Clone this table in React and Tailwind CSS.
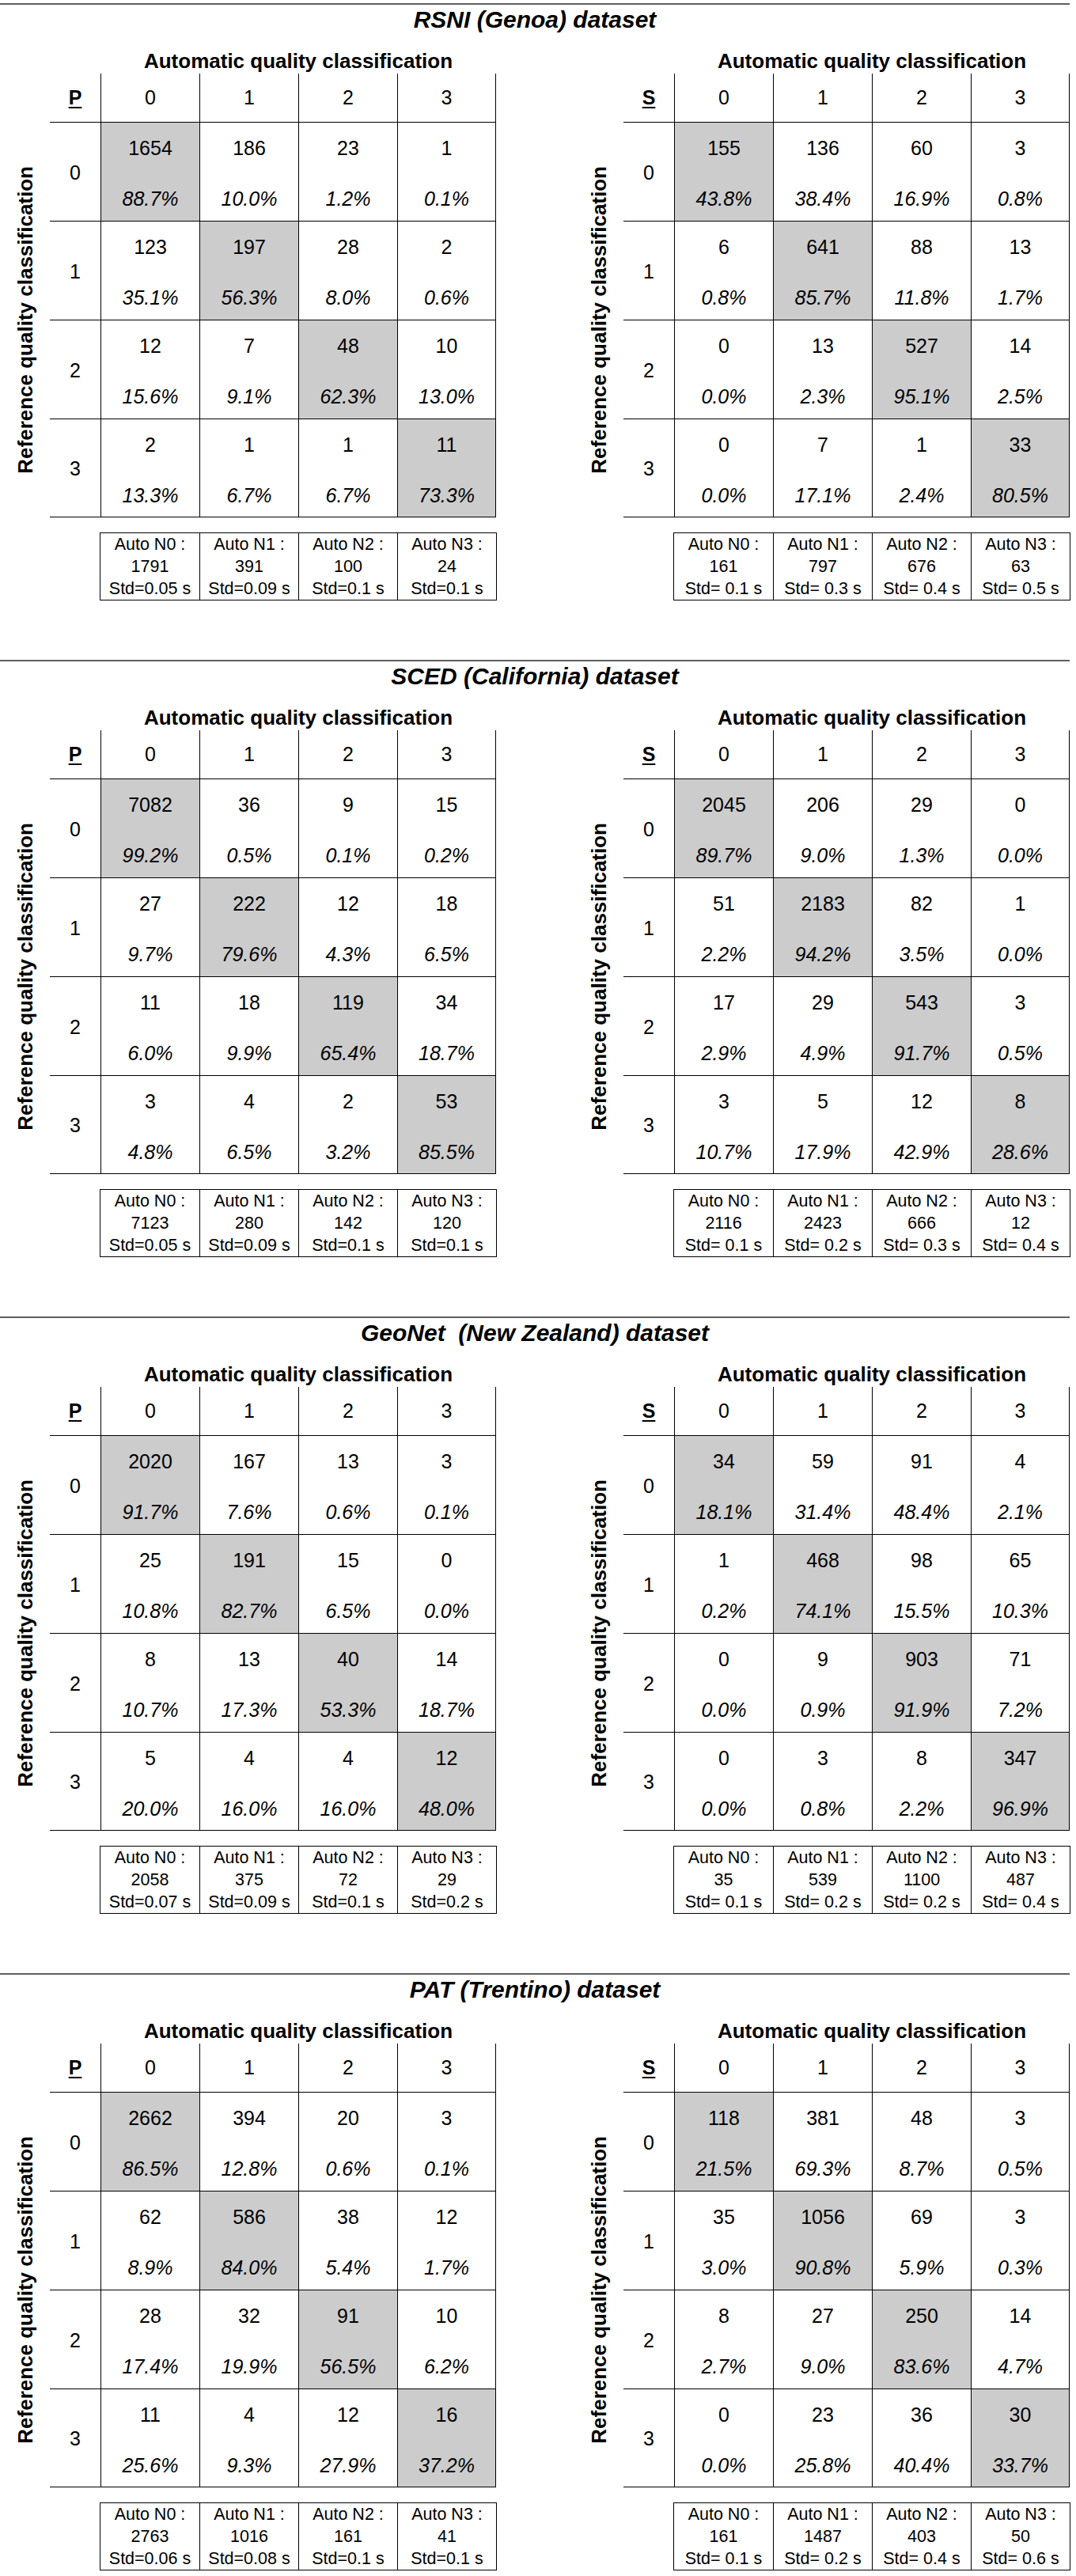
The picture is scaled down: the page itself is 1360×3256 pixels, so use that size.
const SECTIONS = [
    {
        title: "RSNI (Genoa) dataset",
        p: {
            rows: [
                [["1654", "88.7%"], ["186", "10.0%"], ["23", "1.2%"], ["1", "0.1%"]],
                [["123", "35.1%"], ["197", "56.3%"], ["28", "8.0%"], ["2", "0.6%"]],
                [["12", "15.6%"], ["7", "9.1%"], ["48", "62.3%"], ["10", "13.0%"]],
                [["2", "13.3%"], ["1", "6.7%"], ["1", "6.7%"], ["11", "73.3%"]],
            ],
            totals: ["1791", "391", "100", "24"],
            std: ["Std=0.05 s", "Std=0.09 s", "Std=0.1 s", "Std=0.1 s"],
        },
        s: {
            rows: [
                [["155", "43.8%"], ["136", "38.4%"], ["60", "16.9%"], ["3", "0.8%"]],
                [["6", "0.8%"], ["641", "85.7%"], ["88", "11.8%"], ["13", "1.7%"]],
                [["0", "0.0%"], ["13", "2.3%"], ["527", "95.1%"], ["14", "2.5%"]],
                [["0", "0.0%"], ["7", "17.1%"], ["1", "2.4%"], ["33", "80.5%"]],
            ],
            totals: ["161", "797", "676", "63"],
            std: ["Std= 0.1 s", "Std= 0.3 s", "Std= 0.4 s", "Std= 0.5 s"],
        },
    },
    {
        title: "SCED (California) dataset",
        p: {
            rows: [
                [["7082", "99.2%"], ["36", "0.5%"], ["9", "0.1%"], ["15", "0.2%"]],
                [["27", "9.7%"], ["222", "79.6%"], ["12", "4.3%"], ["18", "6.5%"]],
                [["11", "6.0%"], ["18", "9.9%"], ["119", "65.4%"], ["34", "18.7%"]],
                [["3", "4.8%"], ["4", "6.5%"], ["2", "3.2%"], ["53", "85.5%"]],
            ],
            totals: ["7123", "280", "142", "120"],
            std: ["Std=0.05 s", "Std=0.09 s", "Std=0.1 s", "Std=0.1 s"],
        },
        s: {
            rows: [
                [["2045", "89.7%"], ["206", "9.0%"], ["29", "1.3%"], ["0", "0.0%"]],
                [["51", "2.2%"], ["2183", "94.2%"], ["82", "3.5%"], ["1", "0.0%"]],
                [["17", "2.9%"], ["29", "4.9%"], ["543", "91.7%"], ["3", "0.5%"]],
                [["3", "10.7%"], ["5", "17.9%"], ["12", "42.9%"], ["8", "28.6%"]],
            ],
            totals: ["2116", "2423", "666", "12"],
            std: ["Std= 0.1 s", "Std= 0.2 s", "Std= 0.3 s", "Std= 0.4 s"],
        },
    },
    {
        title: "GeoNet  (New Zealand) dataset",
        p: {
            rows: [
                [["2020", "91.7%"], ["167", "7.6%"], ["13", "0.6%"], ["3", "0.1%"]],
                [["25", "10.8%"], ["191", "82.7%"], ["15", "6.5%"], ["0", "0.0%"]],
                [["8", "10.7%"], ["13", "17.3%"], ["40", "53.3%"], ["14", "18.7%"]],
                [["5", "20.0%"], ["4", "16.0%"], ["4", "16.0%"], ["12", "48.0%"]],
            ],
            totals: ["2058", "375", "72", "29"],
            std: ["Std=0.07 s", "Std=0.09 s", "Std=0.1 s", "Std=0.2 s"],
        },
        s: {
            rows: [
                [["34", "18.1%"], ["59", "31.4%"], ["91", "48.4%"], ["4", "2.1%"]],
                [["1", "0.2%"], ["468", "74.1%"], ["98", "15.5%"], ["65", "10.3%"]],
                [["0", "0.0%"], ["9", "0.9%"], ["903", "91.9%"], ["71", "7.2%"]],
                [["0", "0.0%"], ["3", "0.8%"], ["8", "2.2%"], ["347", "96.9%"]],
            ],
            totals: ["35", "539", "1100", "487"],
            std: ["Std= 0.1 s", "Std= 0.2 s", "Std= 0.2 s", "Std= 0.4 s"],
        },
    },
    {
        title: "PAT (Trentino) dataset",
        p: {
            rows: [
                [["2662", "86.5%"], ["394", "12.8%"], ["20", "0.6%"], ["3", "0.1%"]],
                [["62", "8.9%"], ["586", "84.0%"], ["38", "5.4%"], ["12", "1.7%"]],
                [["28", "17.4%"], ["32", "19.9%"], ["91", "56.5%"], ["10", "6.2%"]],
                [["11", "25.6%"], ["4", "9.3%"], ["12", "27.9%"], ["16", "37.2%"]],
            ],
            totals: ["2763", "1016", "161", "41"],
            std: ["Std=0.06 s", "Std=0.08 s", "Std=0.1 s", "Std=0.1 s"],
        },
        s: {
            rows: [
                [["118", "21.5%"], ["381", "69.3%"], ["48", "8.7%"], ["3", "0.5%"]],
                [["35", "3.0%"], ["1056", "90.8%"], ["69", "5.9%"], ["3", "0.3%"]],
                [["8", "2.7%"], ["27", "9.0%"], ["250", "83.6%"], ["14", "4.7%"]],
                [["0", "0.0%"], ["23", "25.8%"], ["36", "40.4%"], ["30", "33.7%"]],
            ],
            totals: ["161", "1487", "403", "50"],
            std: ["Std= 0.1 s", "Std= 0.2 s", "Std= 0.4 s", "Std= 0.6 s"],
        },
    },
];

// grid columns of the four automatic classes (column 1 = axis label, 2 = row labels)
const COL = ["col-start-3", "col-start-4", "col-start-5", "col-start-6"];
const ROW = ["row-start-2", "row-start-3", "row-start-4", "row-start-5"];

// One confusion matrix: axis labels, 4x4 grid with the diagonal shaded, and
// the per-class totals box underneath.
const Matrix = ({ phase, data }) => (
    <div className="w-[627px]">
        <div className="ml-[127px] w-[500px] text-center text-[26px] font-bold leading-[32px] whitespace-nowrap">
            Automatic quality classification
        </div>

        <div className="grid grid-cols-[63px_64px_repeat(4,125px)] grid-rows-[61px_repeat(4,125px)]">
            <div className="col-start-1 row-start-2 row-span-4 flex items-center justify-center">
                <span className="[writing-mode:vertical-rl] rotate-180 whitespace-nowrap text-[26px] font-bold leading-none">
                    Reference quality classification
                </span>
            </div>

            <div className="col-start-2 row-start-1 flex items-center justify-center text-[25px] font-bold underline underline-offset-[3px]">
                {phase}
            </div>
            {[0, 1, 2, 3].map((c) => (
                <div key={c}
                    className={`${COL[c]} row-start-1 flex items-center justify-center border-l border-black text-[25px] ${c === 3 ? "border-r" : ""}`}>
                    {c}
                </div>
            ))}

            {data.rows.map((row, r) => (
                <div key={r} className="contents">
                    <div className={`col-start-2 ${ROW[r]} flex items-center justify-center border-t border-black pt-[3px] text-[25px] ${r === 3 ? "border-b" : ""}`}>
                        {r}
                    </div>
                    {row.map(([n, pct], c) => (
                        <div key={c}
                            className={`${COL[c]} ${ROW[r]} flex flex-col items-center border-t border-l border-black pt-[17px] text-[25px] leading-[30px] ${c === r ? "bg-[#cccccc]" : ""} ${c === 3 ? "border-r" : ""} ${r === 3 ? "border-b" : ""}`}>
                            <div>{n}</div>
                            <div className="mt-[34px] italic">{pct}</div>
                        </div>
                    ))}
                </div>
            ))}
        </div>

        <div className="ml-[126px] mt-[19px] grid w-[502px] grid-cols-[repeat(4,1fr)] border border-black text-[21.5px] leading-[28px]">
            {data.totals.map((t, i) => (
                <div key={i} className={`text-center whitespace-nowrap ${i > 0 ? "border-l border-black" : ""}`}>
                    <div>Auto N{i} :</div>
                    <div>{t}</div>
                    <div>{data.std[i]}</div>
                </div>
            ))}
        </div>
    </div>
);

export default function App() {
    return (
        <div className="min-h-[3256px] w-[1360px] bg-white pt-[4px] text-black font-['Liberation_Sans',Arial,sans-serif]">
            {SECTIONS.map((s) => (
                <section key={s.title} className="h-[830px] w-[1352px]">
                    <div className="h-[2px] bg-[#5e5e5e]" />
                    <h2 className="h-[38px] whitespace-pre text-center text-[30px] font-bold italic leading-[38px]">
                        {s.title}
                    </h2>
                    <div className="mt-[17px] flex gap-[98px]">
                        <Matrix phase="P" data={s.p} />
                        <Matrix phase="S" data={s.s} />
                    </div>
                </section>
            ))}
        </div>
    );
}
